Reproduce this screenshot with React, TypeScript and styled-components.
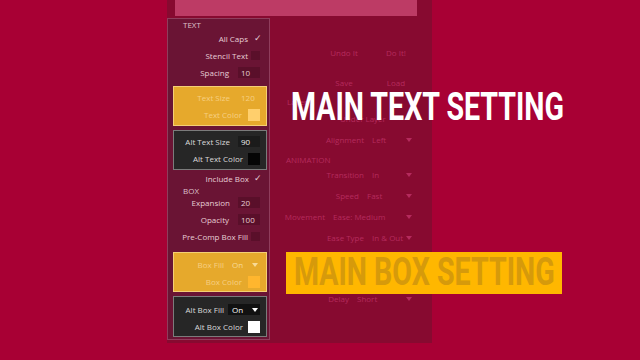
import React from 'react'
import styled, { createGlobalStyle } from 'styled-components'

const colors = {
  page: '#a80034',
  dialog: '#870a30',
  header: '#bd3b65',
  panel: '#6a1434',
  panelBorder: '#8f3d5c',
  panelText: '#e6cdd5',
  well: '#5a0f2a',
  dim: '#b52b5d',
  gold: '#e6a92c',
  goldBorder: '#f4cf76',
  goldText: '#f6cf82',
  dark: '#262626',
  darkBorder: '#7b7b7b',
  darkText: '#dadada',
  banner: '#ffb700',
  bannerText: '#d69a0b',
}

const GlobalStyle = createGlobalStyle`
  html, body {
    margin: 0;
    padding: 0;
    background: ${colors.page};
    overflow: hidden;
  }
  body {
    font-family: 'Open Sans', 'DejaVu Sans', sans-serif;
  }
`

const Stage = styled.div`
  position: relative;
  width: 640px;
  height: 360px;
  display: flex;
  padding-left: 167px;
  box-sizing: border-box;
`

const Dialog = styled.div`
  width: 265px;
  height: 343px;
  background: ${colors.dialog};
  display: flex;
  flex-direction: column;
  gap: 2px;
`

const Header = styled.div`
  height: 16px;
  margin: 0 15px 0 8px;
  background: ${colors.header};
  flex-shrink: 0;
`

const Body = styled.div`
  flex: 1;
  display: flex;
  align-items: flex-start;
`

/* left inspector */

const Panel = styled.div`
  width: 103px;
  height: 322px;
  box-sizing: border-box;
  border: 1px solid ${colors.panelBorder};
  background: ${colors.panel};
  color: ${colors.panelText};
  display: flex;
  flex-direction: column;
  font-size: 8px;
`

const Section = styled.div<{ $h: number }>`
  height: ${(p) => p.$h}px;
  line-height: ${(p) => p.$h}px;
  padding-left: 15px;
  font-size: 8px;
  color: #dcc0cb;
`

const Row = styled.div<{ $pr?: number }>`
  height: 17px;
  display: flex;
  justify-content: flex-end;
  align-items: center;
  padding-right: ${(p) => p.$pr ?? 9}px;
  white-space: nowrap;
`

const Label = styled.span<{ $gap: number }>`
  margin-right: ${(p) => p.$gap}px;
`

const Field = styled.span<{ $bg: string; $fg?: string }>`
  width: 22px;
  height: 11px;
  line-height: 11px;
  padding-left: 3px;
  box-sizing: border-box;
  background: ${(p) => p.$bg};
  color: ${(p) => p.$fg ?? 'inherit'};
`

const CheckBox = styled.span`
  width: 9px;
  height: 9px;
  background: ${colors.well};
`

const Check = styled.span`
  width: 8px;
  margin-right: -2px;
  font-family: 'DejaVu Sans', sans-serif;
  font-size: 9px;
  line-height: 9px;
`

const Swatch = styled.span<{ $color: string }>`
  width: 12px;
  height: 12px;
  background: ${(p) => p.$color};
`

const Group = styled.div<{ $tone: 'gold' | 'dark'; $mt: number; $pt: number }>`
  margin: ${(p) => p.$mt}px 2px 0 5px;
  padding: ${(p) => p.$pt}px 0 ${(p) => (p.$pt === 2 ? 2 : 1)}px;
  border: 1px solid ${(p) => (p.$tone === 'gold' ? colors.goldBorder : colors.darkBorder)};
  background: ${(p) => (p.$tone === 'gold' ? colors.gold : colors.dark)};
  color: ${(p) => (p.$tone === 'gold' ? colors.goldText : colors.darkText)};
`

const MiniSelect = styled.span<{ $bg: string; $fg: string }>`
  width: 32px;
  height: 11px;
  display: flex;
  align-items: center;
  justify-content: space-between;
  padding: 0 2px 0 4px;
  box-sizing: border-box;
  background: ${(p) => p.$bg};
  color: ${(p) => p.$fg};
`

const Arrow = styled.span<{ $color?: string }>`
  width: 0;
  height: 0;
  border-left: 3px solid transparent;
  border-right: 3px solid transparent;
  border-top: 4px solid ${(p) => p.$color ?? 'currentColor'};
`

/* right column of the dialog */

const RightCol = styled.div`
  flex: 1;
  display: flex;
  flex-direction: column;
  color: ${colors.dim};
  font-size: 8px;
`

const ButtonRow = styled.div<{ $mt: number }>`
  height: 20px;
  margin-top: ${(p) => p.$mt}px;
  padding-left: 49px;
  display: flex;
  gap: 2px;
`

const Btn = styled.button`
  width: 50px;
  height: 20px;
  padding: 0;
  border: none;
  background: transparent;
  color: ${colors.dim};
  font-family: inherit;
  font-size: 8px;
`

const NoteRow = styled.div<{ $h: number; $pl: number }>`
  height: ${(p) => p.$h}px;
  line-height: ${(p) => p.$h}px;
  padding-left: ${(p) => p.$pl}px;
  white-space: nowrap;
`

const RSection = styled.div`
  height: 14px;
  padding: 5px 0 0 16px;
  box-sizing: border-box;
  line-height: 9px;
`

const FieldRow = styled.div<{ $h: number; $mt?: number }>`
  height: ${(p) => p.$h}px;
  margin-top: ${(p) => p.$mt ?? 0}px;
  display: flex;
  justify-content: flex-end;
  align-items: center;
  padding-right: 19px;
  white-space: nowrap;
`

const RLabel = styled.span`
  margin-right: 5px;
`

const Select = styled.span<{ $w: number }>`
  width: ${(p) => p.$w}px;
  display: flex;
  align-items: center;
  justify-content: space-between;
  padding: 0 1px 0 3px;
  box-sizing: border-box;
`

/* caption overlays */

const Caption = styled.div`
  position: absolute;
  left: 291px;
  top: 88px;
  font-family: Roboto, 'Liberation Sans', sans-serif;
  font-weight: 700;
  font-size: 39px;
  line-height: 1;
  color: #fff;
  white-space: nowrap;
  transform: scaleX(0.733);
  transform-origin: left top;
`

const BoxCaption = styled.div`
  position: absolute;
  left: 286px;
  top: 252px;
  width: 276px;
  height: 42px;
  padding: 1px 0 0 8px;
  box-sizing: border-box;
  background: ${colors.banner};
`

const BoxCaptionText = styled.div`
  font-family: Roboto, 'Liberation Sans', sans-serif;
  font-weight: 700;
  font-size: 39px;
  line-height: 1;
  color: ${colors.bannerText};
  white-space: nowrap;
  transform: scaleX(0.733);
  transform-origin: left top;
`

// rows hidden under the box caption carry no text
const fields = [
  { label: 'Transition', value: 'In', w: 44, h: 21 },
  { label: 'Speed', value: 'Fast', w: 49, h: 21 },
  { label: 'Movement', value: 'Ease: Medium', w: 83, h: 21 },
  { label: 'Ease Type', value: 'In & Out', w: 44, h: 21 },
  { label: '', value: '', w: 59, h: 20 },
  { label: '', value: '', w: 44, h: 20 },
  { label: 'Delay', value: 'Short', w: 59, h: 21 },
]

export default function App() {
  return (
    <>
      <GlobalStyle />
      <Stage>
        <Dialog>
          <Header />
          <Body>
            <Panel>
              <Section $h={11}>TEXT</Section>
              <Row>
                <Label $gap={6}>All Caps</Label>
                <Check>✓</Check>
              </Row>
              <Row>
                <Label $gap={3}>Stencil Text</Label>
                <CheckBox />
              </Row>
              <Row>
                <Label $gap={9}>Spacing</Label>
                <Field $bg={colors.well}>10</Field>
              </Row>

              <Group $tone="gold" $mt={5} $pt={2}>
                <Row $pr={6}>
                  <Label $gap={8}>Text Size</Label>
                  <Field $bg={colors.gold}>120</Field>
                </Row>
                <Row $pr={6}>
                  <Label $gap={6}>Text Color</Label>
                  <Swatch $color="#ffcf6c" />
                </Row>
              </Group>

              <Group $tone="dark" $mt={4} $pt={2}>
                <Row $pr={6}>
                  <Label $gap={8}>Alt Text Size</Label>
                  <Field $bg="#1b1b1b" $fg="#f0f0f0">90</Field>
                </Row>
                <Row $pr={6}>
                  <Label $gap={5}>Alt Text Color</Label>
                  <Swatch $color="#050505" />
                </Row>
              </Group>

              <Row>
                <Label $gap={5}>Include Box</Label>
                <Check>✓</Check>
              </Row>
              <Section $h={7}>BOX</Section>
              <Row>
                <Label $gap={8}>Expansion</Label>
                <Field $bg={colors.well}>20</Field>
              </Row>
              <Row>
                <Label $gap={9}>Opacity</Label>
                <Field $bg={colors.well}>100</Field>
              </Row>
              <Row>
                <Label $gap={3}>Pre-Comp Box Fill</Label>
                <CheckBox />
              </Row>

              <Group $tone="gold" $mt={7} $pt={3}>
                <Row $pr={6}>
                  <Label $gap={4}>Box Fill</Label>
                  <MiniSelect $bg={colors.gold} $fg="#f8da96">
                    On
                    <Arrow />
                  </MiniSelect>
                </Row>
                <Row $pr={6}>
                  <Label $gap={6}>Box Color</Label>
                  <Swatch $color="#ffb62e" />
                </Row>
              </Group>

              <Group $tone="dark" $mt={4} $pt={4}>
                <Row $pr={6}>
                  <Label $gap={4}>Alt Box Fill</Label>
                  <MiniSelect $bg="#111111" $fg="#ffffff">
                    On
                    <Arrow />
                  </MiniSelect>
                </Row>
                <Row $pr={6}>
                  <Label $gap={5}>Alt Box Color</Label>
                  <Swatch $color="#ffffff" />
                </Row>
              </Group>
            </Panel>

            <RightCol>
              <ButtonRow $mt={24}>
                <Btn>Undo It</Btn>
                <Btn>Do It!</Btn>
              </ButtonRow>
              <ButtonRow $mt={10}>
                <Btn>Save</Btn>
                <Btn>Load</Btn>
              </ButtonRow>
              <NoteRow $h={20} $pl={17}>Layer</NoteRow>
              <NoteRow $h={14} $pl={70}>Under Layer</NoteRow>
              <FieldRow $h={21} $mt={3}>
                <RLabel>Alignment</RLabel>
                <Select $w={44}>
                  Left
                  <Arrow />
                </Select>
              </FieldRow>
              <RSection>ANIMATION</RSection>
              {fields.map((f, i) => (
                <FieldRow key={i} $h={f.h}>
                  {f.label && (
                    <>
                      <RLabel>{f.label}</RLabel>
                      <Select $w={f.w}>
                        {f.value}
                        <Arrow />
                      </Select>
                    </>
                  )}
                </FieldRow>
              ))}
            </RightCol>
          </Body>
        </Dialog>

        <Caption>MAIN TEXT SETTING</Caption>
        <BoxCaption>
          <BoxCaptionText>MAIN BOX SETTING</BoxCaptionText>
        </BoxCaption>
      </Stage>
    </>
  )
}
